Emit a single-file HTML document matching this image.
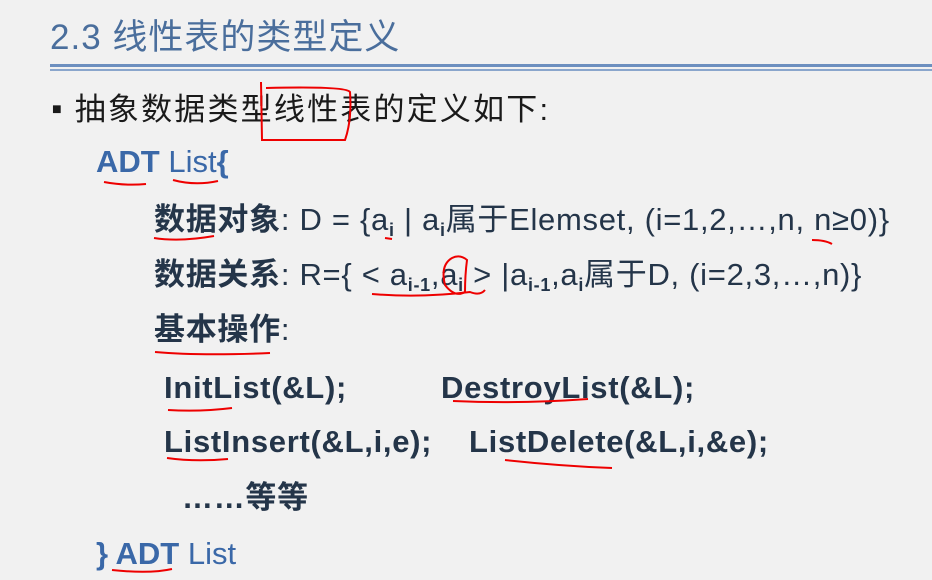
<!DOCTYPE html>
<html><head><meta charset="utf-8"><style>
body{margin:0;width:932px;height:580px;background:#f1f1f1;position:relative;overflow:hidden;font-family:"Liberation Sans","Noto Sans CJK SC",sans-serif}
.t{position:absolute;white-space:nowrap;line-height:1}
.title{left:50px;top:20px;font-size:35px;color:#4a6e9c;letter-spacing:1px}
.hl{position:absolute;left:50px;right:0;height:3px;background:#6d8fbf}
.b{color:#1a1a1a;font-size:31px;letter-spacing:2.2px}
.adt{color:#3a68a8;font-size:31px}
.d{color:#243549;font-size:31px;letter-spacing:0.7px}
.bold{font-weight:bold}
sub{font-size:18px;vertical-align:-6px;font-weight:bold}
svg{position:absolute;left:0;top:0}
</style></head><body>
<div class="t title">2.3 线性表的类型定义</div>
<div class="hl" style="top:64px"></div>
<div class="hl" style="top:69px;height:2px;background:#8aa6cc"></div>
<div class="t b" style="left:52px;top:94px"><span style="font-size:16px;vertical-align:6px">■</span> 抽象数据类型线性表的定义如下:</div>
<div class="t adt" style="left:96px;top:146px"><b>ADT</b> List<b>{</b></div>
<div class="t d" style="left:154px;top:204px"><b>数据对象</b>: D = {a<sub>i</sub> | a<sub>i</sub>属于Elemset, (i=1,2,…,n, n≥0)}</div>
<div class="t d" style="left:154px;top:259px"><b>数据关系</b>: R={ &lt; a<sub>i-1</sub>,a<sub>i</sub> &gt; |a<sub>i-1</sub>,a<sub>i</sub>属于D, (i=2,3,…,n)}</div>
<div class="t d bold" style="left:154px;top:314px">基本操作<span style="font-weight:normal">:</span></div>
<div class="t d bold" style="left:164px;top:372px">InitList(&amp;L);</div>
<div class="t d bold" style="left:441px;top:372px">DestroyList(&amp;L);</div>
<div class="t d bold" style="left:164px;top:426px">ListInsert(&amp;L,i,e);</div>
<div class="t d bold" style="left:469px;top:426px">ListDelete(&amp;L,i,&amp;e);</div>
<div class="t d bold" style="left:182px;top:482px">……等等</div>
<div class="t adt" style="left:96px;top:538px"><b>} ADT</b> List</div>
<svg width="932" height="580" fill="none" stroke="#e00" stroke-width="2">
<path d="M261 82 L262 140 L345 140 Q352 120 350 92 Q346 86 266 88"/>
<path d="M104 182 Q125 186 146 184"/>
<path d="M173 180 Q195 186 218 181"/>
<path d="M154 238 Q180 242 214 236"/>
<path d="M385 238 L392 239"/>
<path d="M812 240 Q825 240 832 244"/>
<path d="M372 294 Q420 298 470 292 Q480 296 485 290"/>
<path d="M452 258 Q440 265 445 285 Q455 298 465 292 Q465 275 467 260 Q460 254 452 258"/>
<path d="M155 352 Q200 356 270 353"/>
<path d="M168 410 Q200 412 232 408"/>
<path d="M453 401 Q520 404 588 399"/>
<path d="M167 458 Q195 462 228 459"/>
<path d="M505 460 Q560 466 612 468"/>
<path d="M112 570 Q150 574 172 569"/>
</svg>
</body></html>
